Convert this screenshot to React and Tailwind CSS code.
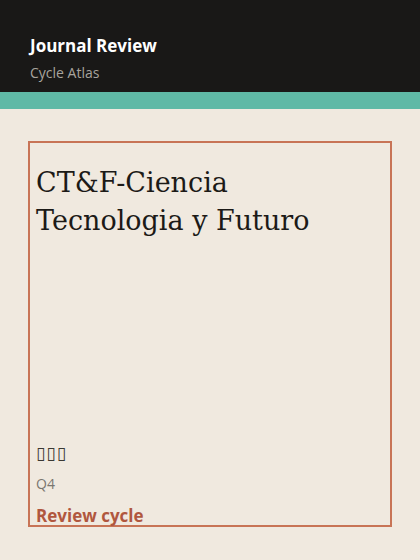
import React from "react";

const sans = { fontFamily: '"Segoe UI", "Open Sans", "Noto Sans", sans-serif' };

export default function App() {
  return (
    <div className="w-[420px] h-[560px] bg-[#f0e9df] overflow-hidden" style={sans}>
      <header className="h-[92px] bg-[#191817] px-[30px] pt-[35px]">
        <h1 className="text-[17px] font-bold leading-[22px] text-white">Journal Review</h1>
        <p className="mt-[7px] text-[14px] leading-[18px] text-[#a8a49e]">Cycle Atlas</p>
      </header>
      <div className="h-[17px] bg-[#5fb9a6]" />
      <main className="px-[28px] pt-[32px]">
        <div className="h-[386px] border-2 border-[#c87456] px-[6px] pt-[21px] flex flex-col">
          <h2
            className="max-w-[320px] text-[27px] leading-[38px] text-[#1c1a17]"
            style={{ fontFamily: 'Georgia, "DejaVu Serif", serif' }}
          >
            CT&amp;F-Ciencia Tecnologia y Futuro
          </h2>
          <div className="mt-auto mb-[-2px]">
            <p className="text-[17px] leading-[22px] text-[#3a3833] tracking-[1px]" style={{ fontFamily: '"DejaVu Sans", sans-serif' }}>▯▯▯</p>
            <p className="mt-[11px] text-[14px] leading-[18px] text-[#7a766f]">Q4</p>
            <p className="mt-[12px] text-[17px] font-bold leading-[22px] text-[#b0573e]">Review cycle</p>
          </div>
        </div>
      </main>
    </div>
  );
}
